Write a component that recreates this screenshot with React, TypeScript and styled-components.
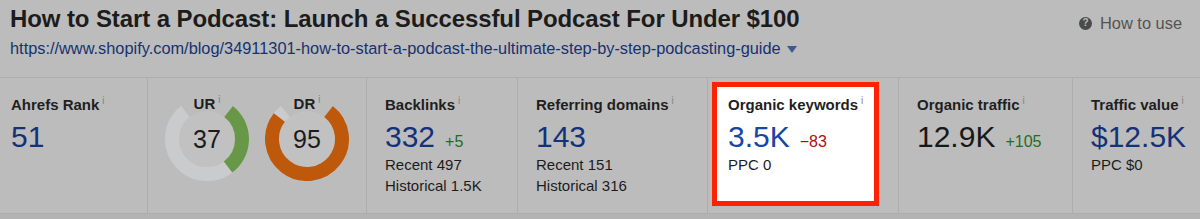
import React from "react";
import styled, { createGlobalStyle } from "styled-components";

const GlobalStyle = createGlobalStyle`
  html, body {
    margin: 0;
    padding: 0;
    background: #bcbcbc;
  }
  body {
    font-family: "Liberation Sans", Arial, sans-serif;
    color: #1c1c1c;
  }
`;

type Metric = {
  label: string;
  value: string;
  delta?: string;
  deltaTone?: "up" | "down";
  lines?: string[];
  tone?: "blue" | "dark";
  highlight?: boolean;
};

const metricsAfter: Metric[] = [
  {
    label: "Backlinks",
    value: "332",
    delta: "+5",
    deltaTone: "up",
    lines: ["Recent 497", "Historical 1.5K"],
    tone: "blue",
  },
  {
    label: "Referring domains",
    value: "143",
    lines: ["Recent 151", "Historical 316"],
    tone: "blue",
  },
  {
    label: "Organic keywords",
    value: "3.5K",
    delta: "\u221283",
    deltaTone: "down",
    lines: ["PPC 0"],
    tone: "blue",
    highlight: true,
  },
  {
    label: "Organic traffic",
    value: "12.9K",
    delta: "+105",
    deltaTone: "up",
    tone: "dark",
  },
  {
    label: "Traffic value",
    value: "$12.5K",
    lines: ["PPC $0"],
    tone: "blue",
  },
];

const polar = (cx: number, cy: number, r: number, deg: number) => {
  const rad = ((deg - 90) * Math.PI) / 180;
  return [cx + r * Math.cos(rad), cy + r * Math.sin(rad)];
};

const arc = (cx: number, cy: number, r: number, from: number, to: number) => {
  const [x1, y1] = polar(cx, cy, r, from);
  const [x2, y2] = polar(cx, cy, r, to);
  const large = to - from > 180 ? 1 : 0;
  return `M ${x1} ${y1} A ${r} ${r} 0 ${large} 1 ${x2} ${y2}`;
};

const GAP = 38;
const SWEEP = 360 - GAP * 2;

const Gauge = ({
  label,
  value,
  color,
}: {
  label: string;
  value: number;
  color: string;
}) => {
  const end = GAP + (SWEEP * value) / 100;
  return (
    <GaugeBox>
      <svg width="84" height="84" viewBox="0 0 84 84">
        <circle cx="42" cy="42" r="28" fill="#c1c1c1" />
        <path
          d={arc(42, 42, 35, GAP, 360 - GAP)}
          fill="none"
          stroke="#cacbcc"
          strokeWidth="14"
        />
        <path
          d={arc(42, 42, 35, GAP, end)}
          fill="none"
          stroke={color}
          strokeWidth="14"
        />
      </svg>
      <GaugeLabel>
        {label}
        <Info>i</Info>
      </GaugeLabel>
      <GaugeValue>{value}</GaugeValue>
    </GaugeBox>
  );
};

const MetricBody = ({ m }: { m: Metric }) => (
  <>
    <Label>
      {m.label}
      <Info>i</Info>
    </Label>
    <ValueRow>
      <Value $tone={m.tone ?? "blue"} $lit={!!m.highlight}>
        {m.value}
      </Value>
      {m.delta && (
        <Delta $tone={m.deltaTone ?? "up"} $lit={!!m.highlight}>
          {m.delta}
        </Delta>
      )}
    </ValueRow>
    {m.lines?.map((l) => (
      <SubLine key={l}>{l}</SubLine>
    ))}
  </>
);

const App = () => (
  <>
    <GlobalStyle />
    <Page>
      <Header>
        <TitleBlock>
          <Title>
            How to Start a Podcast: Launch a Successful Podcast For Under $100
          </Title>
          <UrlRow>
            <Url>
              https://www.shopify.com/blog/34911301-how-to-start-a-podcast-the-ultimate-step-by-step-podcasting-guide
            </Url>
            <Caret />
          </UrlRow>
        </TitleBlock>
        <HowTo>
          <HelpIcon>?</HelpIcon>
          How to use
        </HowTo>
      </Header>
      <MetricsRow>
        <Cell $pad="18px 11px">
          <MetricBody m={{ label: "Ahrefs Rank", value: "51", tone: "blue" }} />
        </Cell>
        <GaugeCell>
          <Gauge label="UR" value={37} color="#689847" />
          <Gauge label="DR" value={95} color="#be590b" />
        </GaugeCell>
        {metricsAfter.map((m) =>
          m.highlight ? (
            <Cell key={m.label} $pad="4px 19px 7px 4px">
              <Highlight>
                <MetricBody m={m} />
              </Highlight>
            </Cell>
          ) : (
            <Cell key={m.label} $pad="18px 18px">
              <MetricBody m={m} />
            </Cell>
          )
        )}
      </MetricsRow>
      <Footer />
    </Page>
  </>
);

export default App;

const Page = styled.div`
  display: flex;
  flex-direction: column;
  width: 1200px;
  height: 219px;
  overflow: hidden;
  background: #bcbcbc;
`;

const Header = styled.div`
  display: flex;
  justify-content: space-between;
  align-items: flex-start;
  flex: 0 0 77px;
  padding: 5px 18px 0 10px;
  box-sizing: border-box;
`;

const TitleBlock = styled.div`
  display: flex;
  flex-direction: column;
  gap: 5px;
`;

const Title = styled.h1`
  margin: 0;
  font-size: 24px;
  line-height: 28px;
  font-weight: 700;
  color: #1c1c1c;
  letter-spacing: -0.1px;
`;

const UrlRow = styled.div`
  display: flex;
  align-items: center;
  gap: 6px;
`;

const Url = styled.span`
  font-size: 16.35px;
  line-height: 20px;
  color: #17326f;
`;

const Caret = styled.span`
  width: 0;
  height: 0;
  margin-top: 3px;
  border-left: 5px solid transparent;
  border-right: 5px solid transparent;
  border-top: 7px solid #3d5a8c;
`;

const HowTo = styled.div`
  display: flex;
  align-items: center;
  gap: 8px;
  margin-top: 8px;
  font-size: 16.4px;
  line-height: 20px;
  color: #545454;
`;

const HelpIcon = styled.span`
  display: inline-flex;
  align-items: center;
  justify-content: center;
  width: 13px;
  height: 13px;
  border-radius: 50%;
  background: #4a4a4a;
  color: #bcbcbc;
  font-size: 10px;
  font-weight: 700;
  line-height: 1;
`;

const MetricsRow = styled.div`
  display: grid;
  grid-template-columns: 147px 219px 151px 190px 191px 174px 128px;
  grid-template-rows: 135px;
  flex: 0 0 137px;
  overflow: hidden;
  border-top: 1px solid #adadad;
  border-bottom: 1px solid #adadad;
  box-sizing: border-box;
`;

const Cell = styled.div<{ $pad: string }>`
  display: flex;
  flex-direction: column;
  align-items: flex-start;
  padding: ${({ $pad }) => $pad};
  border-left: 1px solid #adadad;
  box-sizing: border-box;
  min-width: 0;
  &:first-child {
    border-left: none;
  }
`;

const Highlight = styled.div`
  align-self: stretch;
  flex: 1;
  display: flex;
  flex-direction: column;
  align-items: flex-start;
  background: #ffffff;
  border: 5px solid #ff2200;
  padding: 9px 11px;
`;

const Label = styled.div`
  font-size: 15px;
  line-height: 18px;
  font-weight: 700;
  color: #1f1f1f;
  white-space: nowrap;
`;

const Info = styled.sup`
  margin-left: 3px;
  font-size: 10px;
  font-weight: 400;
  color: #858585;
  vertical-align: 6px;
  line-height: 0;
`;

const ValueRow = styled.div`
  display: flex;
  align-items: baseline;
  gap: 10px;
  margin-top: 6px;
`;

const Value = styled.span<{ $tone: "blue" | "dark"; $lit: boolean }>`
  font-size: 30px;
  line-height: 34px;
  color: ${({ $tone, $lit }) =>
    $tone === "dark" ? "#181818" : $lit ? "#1845a6" : "#14317a"};
`;

const Delta = styled.span<{ $tone: "up" | "down"; $lit: boolean }>`
  font-size: 16px;
  color: ${({ $tone, $lit }) =>
    $tone === "down" ? ($lit ? "#b30d0d" : "#7e0a0a") : "#1f6e22"};
`;

const SubLine = styled.div`
  font-size: 15px;
  line-height: 21px;
  color: #1c1c1c;
  &:first-of-type {
    margin-top: 3px;
  }
`;

const GaugeCell = styled.div`
  display: flex;
  justify-content: center;
  gap: 16px;
  padding-top: 19px;
  border-left: 1px solid #adadad;
`;

const GaugeBox = styled.div`
  display: grid;
  width: 84px;
  height: 84px;
  & > * {
    grid-area: 1 / 1;
  }
`;

const GaugeLabel = styled.div`
  justify-self: center;
  align-self: start;
  margin-top: -2px;
  font-size: 15px;
  line-height: 18px;
  font-weight: 700;
  color: #1f1f1f;
`;

const GaugeValue = styled.div`
  justify-self: center;
  align-self: center;
  font-size: 25px;
  line-height: 30px;
  color: #1c1c1c;
`;

const Footer = styled.div`
  flex: 1;
  background: #b3b3b3;
`;
